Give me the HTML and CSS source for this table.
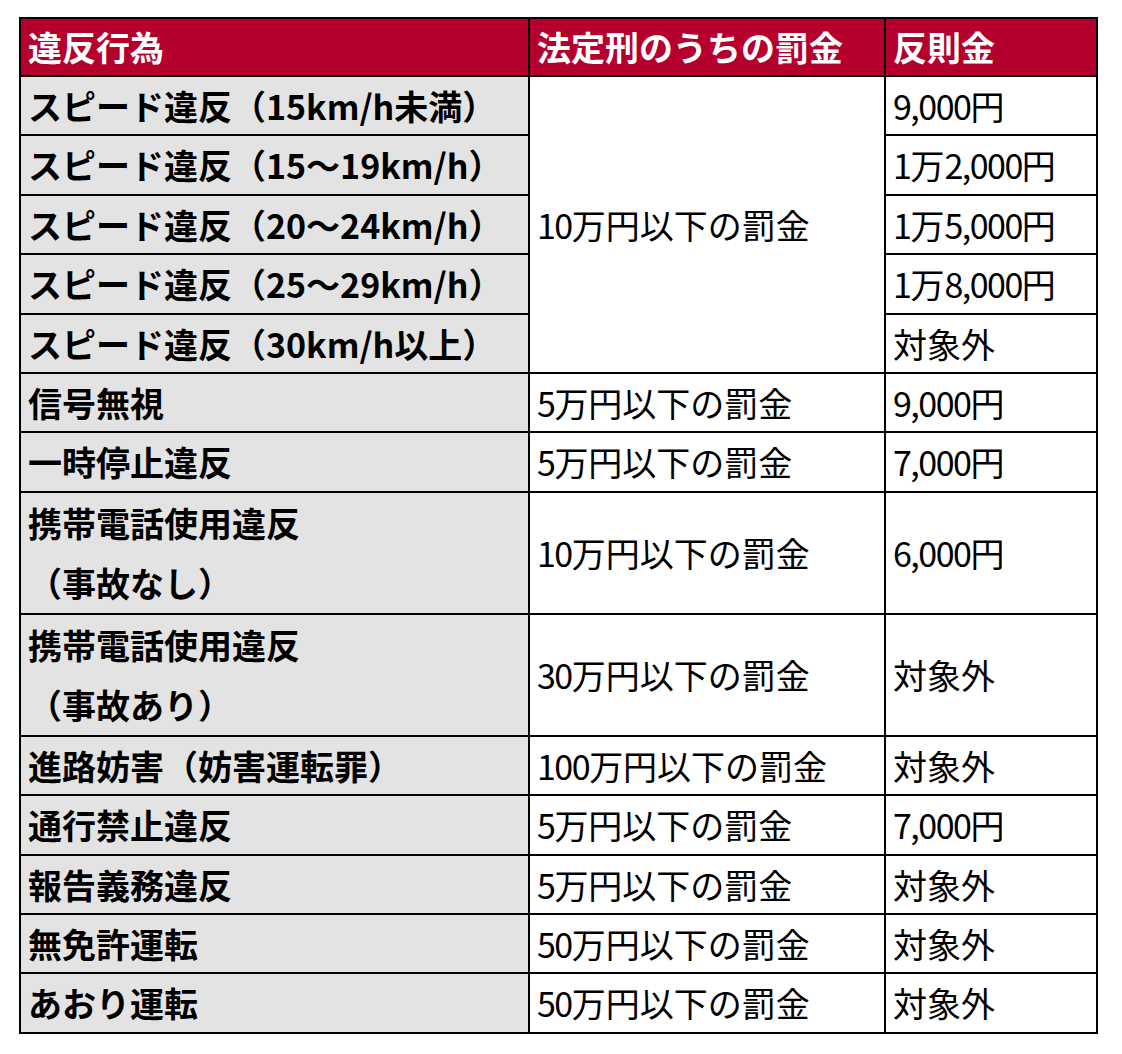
FILE: index.html
```html
<!DOCTYPE html>
<html lang="ja">
<head>
<meta charset="utf-8">
<title>違反行為と罰金</title>
<link rel="stylesheet" href="styles.css">
</head>
<body>
<table class="fines">
  <colgroup>
    <col class="c1"><col class="c2"><col class="c3">
  </colgroup>
  <thead>
    <tr><th>違反行為</th><th>法定刑のうちの罰金</th><th>反則金</th></tr>
  </thead>
  <tbody>
    <tr><td class="act">スピード違反（15km/h未満）</td><td rowspan="5"><span class="num">10</span>万円以下の罰金</td><td><span class="num">9,000</span>円</td></tr>
    <tr><td class="act">スピード違反（15～19km/h）</td><td><span class="num">1</span>万<span class="num">2,000</span>円</td></tr>
    <tr><td class="act">スピード違反（20～24km/h）</td><td><span class="num">1</span>万<span class="num">5,000</span>円</td></tr>
    <tr><td class="act">スピード違反（25～29km/h）</td><td><span class="num">1</span>万<span class="num">8,000</span>円</td></tr>
    <tr><td class="act">スピード違反（30km/h以上）</td><td>対象外</td></tr>
    <tr><td class="act">信号無視</td><td><span class="num">5</span>万円以下の罰金</td><td><span class="num">9,000</span>円</td></tr>
    <tr><td class="act">一時停止違反</td><td><span class="num">5</span>万円以下の罰金</td><td><span class="num">7,000</span>円</td></tr>
    <tr class="two"><td class="act">携帯電話使用違反<br>（事故なし）</td><td><span class="num">10</span>万円以下の罰金</td><td><span class="num">6,000</span>円</td></tr>
    <tr class="two"><td class="act">携帯電話使用違反<br>（事故あり）</td><td><span class="num">30</span>万円以下の罰金</td><td>対象外</td></tr>
    <tr><td class="act">進路妨害（妨害運転罪）</td><td><span class="num">100</span>万円以下の罰金</td><td>対象外</td></tr>
    <tr><td class="act">通行禁止違反</td><td><span class="num">5</span>万円以下の罰金</td><td><span class="num">7,000</span>円</td></tr>
    <tr><td class="act">報告義務違反</td><td><span class="num">5</span>万円以下の罰金</td><td>対象外</td></tr>
    <tr><td class="act">無免許運転</td><td><span class="num">50</span>万円以下の罰金</td><td>対象外</td></tr>
    <tr><td class="act">あおり運転</td><td><span class="num">50</span>万円以下の罰金</td><td>対象外</td></tr>
  </tbody>
</table>
</body>
</html>
```
FILE: styles.css
```css
html, body {
  margin: 0;
  padding: 0;
  background: #ffffff;
}
body {
  font-family: "Noto Sans CJK JP", "Noto Sans", sans-serif;
  color: #000000;
}
.fines {
  border-collapse: collapse;
  table-layout: fixed;
  width: 1077px;
  margin: 17px 0 0 19px;
  font-size: 34px;
}
.c1 { width: 509px; }
.c2 { width: 356px; }
.c3 { width: 212px; }
.fines th,
.fines td {
  border: 2px solid #000000;
  padding: 0 7px;
  text-align: left;
  vertical-align: middle;
  white-space: nowrap;
}
.fines th {
  background: #b5002e;
  color: #ffffff;
  font-weight: 700;
  line-height: 56px;
}
.fines td {
  line-height: 57.4px;
  font-weight: 400;
}
.fines td.act {
  background: #e3e3e3;
  font-weight: 700;
}
.fines tr.two td {
  line-height: 60px;
}
.num {
  letter-spacing: -1.5px;
}
```
